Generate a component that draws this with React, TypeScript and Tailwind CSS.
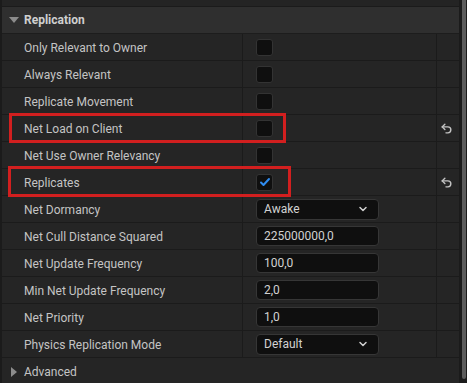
import React from "react";

const Undo = () => (
  <svg width="13" height="13" viewBox="0 0 24 24" fill="none" stroke="#c4c4c4" strokeWidth="2.6" strokeLinecap="round" strokeLinejoin="round">
    <path d="M9 14 4 9l5-5" />
    <path d="M4 9h10.5a5.5 5.5 0 0 1 5.5 5.5a5.5 5.5 0 0 1-5.5 5.5H11" />
  </svg>
);

const Chevron = () => (
  <svg width="12" height="12" viewBox="0 0 24 24" fill="none" stroke="#d0d0d0" strokeWidth="3" strokeLinecap="round" strokeLinejoin="round">
    <path d="m6 9 6 6 6-6" />
  </svg>
);

const Check = ({ checked }: { checked?: boolean }) => (
  <div className="w-[17px] h-[17px] rounded-[3px] bg-[#0f0f0f] border border-[#333333] flex items-center justify-center">
    {checked && (
      <svg width="12" height="12" viewBox="0 0 24 24" fill="none" stroke="#2f8cf0" strokeWidth="4" strokeLinecap="round" strokeLinejoin="round">
        <path d="M4 13l5 5L20 6" />
      </svg>
    )}
  </div>
);

const Input = ({ v }: { v: string }) => (
  <div className="w-[123px] h-[20px] rounded-[4px] bg-[#0f0f0f] border border-[#363636] flex items-center pl-[7px] text-[#d2d2d2]">
    {v}
  </div>
);

const Select = ({ v }: { v: string }) => (
  <div className="w-[123px] h-[21px] rounded-[4px] bg-[#0f0f0f] border border-[#363636] flex items-center justify-between pl-[7px] pr-[9px] text-[#d2d2d2]">
    <span>{v}</span>
    <Chevron />
  </div>
);

type Row = { label: string; value: React.ReactNode; reset?: boolean };

const rows: Row[] = [
  { label: "Only Relevant to Owner", value: <Check /> },
  { label: "Always Relevant", value: <Check /> },
  { label: "Replicate Movement", value: <Check /> },
  { label: "Net Load on Client", value: <Check />, reset: true },
  { label: "Net Use Owner Relevancy", value: <Check /> },
  { label: "Replicates", value: <Check checked />, reset: true },
  { label: "Net Dormancy", value: <Select v="Awake" /> },
  { label: "Net Cull Distance Squared", value: <Input v="225000000,0" /> },
  { label: "Net Update Frequency", value: <Input v="100,0" /> },
  { label: "Min Net Update Frequency", value: <Input v="2,0" /> },
  { label: "Net Priority", value: <Input v="1,0" /> },
  { label: "Physics Replication Mode", value: <Select v="Default" /> },
];

export default function App() {
  return (
    <div
      className="w-[467px] h-[383px] bg-[#1b1b1b] flex overflow-hidden relative text-[12px] text-[#c4c4c4]"
      style={{ fontFamily: "Roboto, 'Liberation Sans', sans-serif" }}
    >
      <div className="w-[459px] flex flex-col pl-[2px]">
        <div className="h-[7px] bg-[#242424] border-b border-[#1b1b1b] shrink-0" />
        <div className="h-[27px] shrink-0 bg-[#2f2f2f] border-b border-[#1d1d1d] flex items-center font-bold text-[#d0d0d0]">
          <div className="w-[22px] flex justify-center pl-[2px]">
            <svg width="10" height="6" viewBox="0 0 10 6"><path d="M0 0h10L5 6z" fill="#8c8c8c" /></svg>
          </div>
          <span>Replication</span>
        </div>
        {rows.map((r) => (
          <div key={r.label} className="h-[27px] shrink-0 bg-[#252525] border-b border-[#1b1b1b] flex">
            <div className="w-[241px] border-r border-[#1b1b1b] flex items-center pl-[22px] pt-[1px]">{r.label}</div>
            <div className="w-[194px] border-r border-[#1b1b1b] flex items-center pl-[13px]">{r.value}</div>
            <div className="flex-1 flex items-center pl-[3px]">{r.reset && <Undo />}</div>
          </div>
        ))}
        <div className="h-[27px] shrink-0 bg-[#252525] flex items-center">
          <div className="w-[22px] flex justify-center pl-[2px]">
            <svg width="6" height="10" viewBox="0 0 6 10"><path d="M0 0l6 5-6 5z" fill="#8c8c8c" /></svg>
          </div>
          <span>Advanced</span>
        </div>
      </div>
      <div className="w-[8px] flex pl-[3px] pr-[1px] pb-[4px]">
        <div className="flex-1 bg-[#5c5c5c] rounded-b-[2px]" />
      </div>

      <div className="absolute left-[9px] top-[113px] w-[277px] h-[30px] border-[3px] border-[#d21f1f]" />
      <div className="absolute left-[8px] top-[166px] w-[283px] h-[31px] border-[3px] border-[#d21f1f]" />
    </div>
  );
}
